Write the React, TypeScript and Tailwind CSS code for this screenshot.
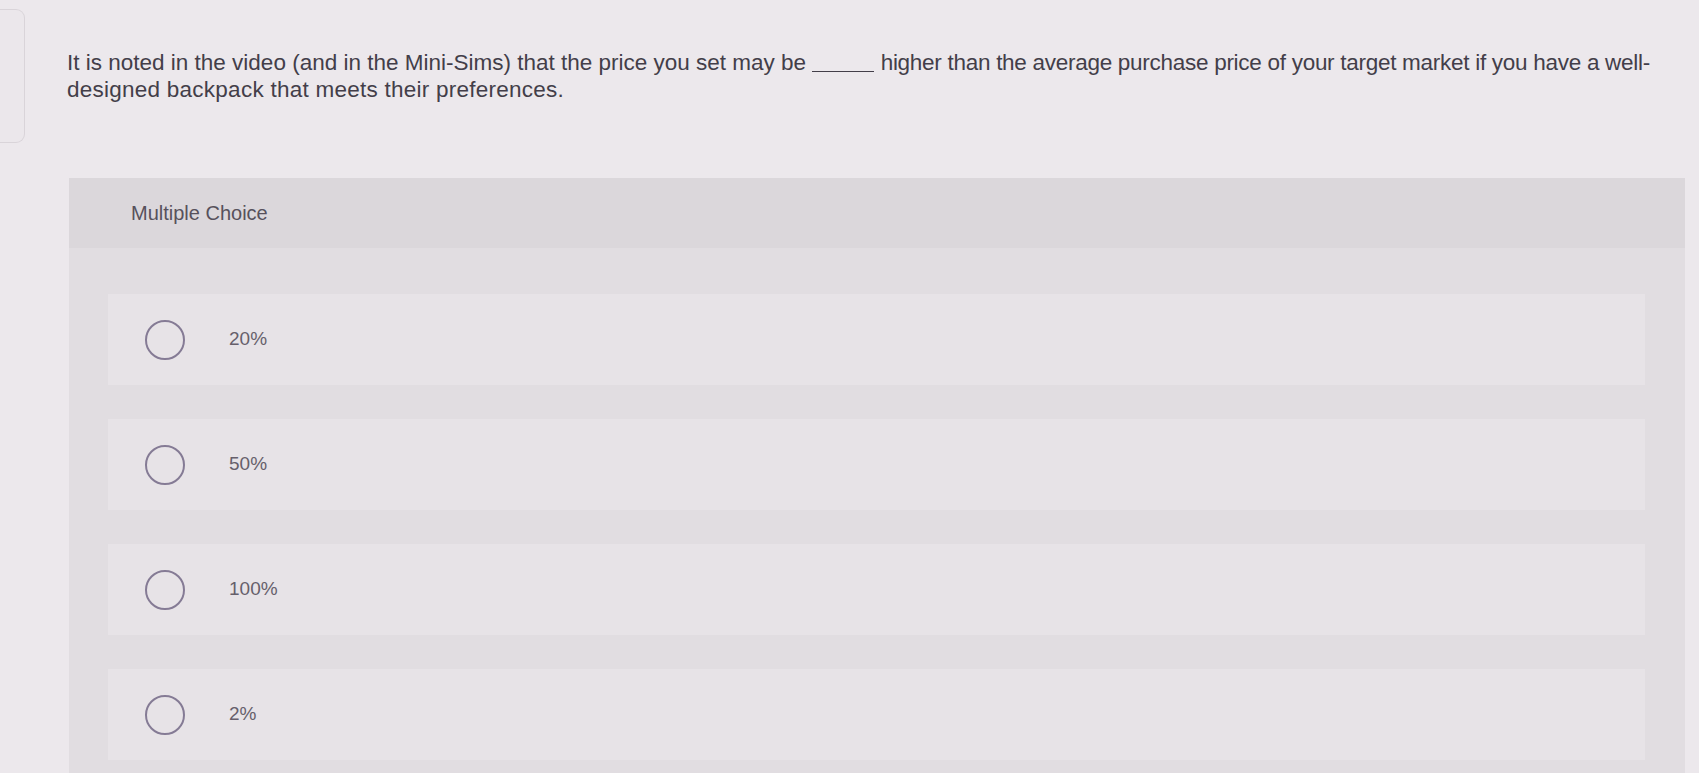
const options = ['20%', '50%', '100%', '2%'];

export default function App() {
  return (
    <div className="flex min-h-[773px] overflow-hidden bg-[#ece8ec] font-['Liberation_Sans',Arial,sans-serif]">
      <div className="mt-[9px] h-[134px] w-[25px] shrink-0 rounded-r-[9px] border border-l-0 border-[#d9d4d9] bg-[#ebe7eb]" />
      <main className="flex-1 pl-[42px] pt-[49px]">
        <p className="max-w-[1630px] text-[22.5px] leading-[27px] text-[#433e49]">
          It is noted in the video (and in the Mini-Sims) that the price you set may be{' '}
          <span className="inline-block w-[62px] border-b border-[#433e49] align-[-2px]" />{' '}
          <span className="tracking-[-0.28px]">higher than the average purchase price of your target market if you have a well-</span>
          <span className="tracking-[0.25px]">designed backpack that meets their preferences.</span>
        </p>
        <section className="ml-[2px] mr-[14px] mt-[75px] bg-[#e1dde1]">
          <div className="flex h-[70px] items-center bg-[#dbd7db] pl-[62px] text-[20px] text-[#57515c]">
            Multiple Choice
          </div>
          <div className="flex flex-col gap-[34px] pb-[20px] pl-[39px] pr-[40px] pt-[46px]">
            {options.map((option) => (
              <label key={option} className="flex h-[91px] items-center bg-[#e7e3e7] pl-[37px]">
                <span className="h-[40px] w-[40px] shrink-0 rounded-full border-2 border-[#857b95]" />
                <span className="ml-[44px] text-[19px] text-[#665f6b]">{option}</span>
              </label>
            ))}
          </div>
        </section>
      </main>
    </div>
  );
}
